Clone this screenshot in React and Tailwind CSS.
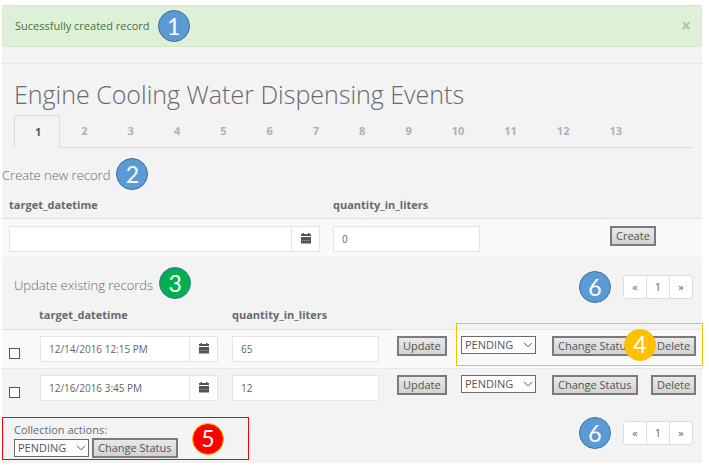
import React from "react";

const BADGE_COLORS = {
  blue: "bg-[#5b9bd5] border-[#41719c]",
  green: "bg-[#00b050] border-[#41719c]",
  amber: "bg-[#ffc000] border-[#ffc000]",
  red: "bg-[#ff0000] border-[#ffc000]",
};

function Badge({ color, children }) {
  return (
    <span
      className={`flex size-8 shrink-0 items-center justify-center rounded-full border font-['Lato','Open_Sans',sans-serif] text-[23px] leading-none text-white ${BADGE_COLORS[color]}`}
    >
      {children}
    </span>
  );
}

function ActionButton({ children }) {
  return (
    <button
      type="button"
      className="h-5 whitespace-nowrap border-2 border-[#7b7b7b] bg-linear-to-b from-[#e9e9e9] to-[#d3d3d3] px-1 text-[11px] leading-4 text-[#555555]"
    >
      {children}
    </button>
  );
}

function StatusSelect({ label, id }) {
  return (
    <div className="relative h-[18px] w-[75px]">
      <select
        id={id}
        aria-label={label}
        defaultValue="PENDING"
        className="block h-full w-full appearance-none border border-[#6b6b6b] bg-white pl-[3px] text-[11px] leading-4 text-[#555555]"
      >
        <option>PENDING</option>
        <option>APPROVED</option>
      </select>
      <svg
        viewBox="0 0 10 6"
        className="pointer-events-none absolute top-1.5 right-[3px] h-1.5 w-2.5"
        fill="none"
        stroke="#555555"
      >
        <path d="M1 0.8 L5 4.8 L9 0.8" />
      </svg>
    </div>
  );
}

function CalendarIcon() {
  return (
    <svg viewBox="0 0 10 11" className="h-[11px] w-2.5" fill="#50545c">
      <path d="M1.5 0h1.5v1h4V0h1.500v1H10v2H0V1h1.500z" />
      <path d="M0 4h10v6.500H0z" />
      <path d="M1 7.500h8" stroke="#a9abb0" strokeWidth="0.8" strokeDasharray="1.200 0.800" />
    </svg>
  );
}

function DateField({ label, value }) {
  return (
    <div className="flex h-[26px] border border-[#e4e4e4] bg-white">
      <input
        type="text"
        aria-label={label}
        defaultValue={value}
        className="w-full min-w-0 flex-1 px-2 text-[10px] text-[#5f6368] outline-none"
      />
      <button
        type="button"
        aria-label="Open calendar"
        className="flex w-7 shrink-0 items-center justify-center border-l border-[#e4e4e4]"
      >
        <CalendarIcon />
      </button>
    </div>
  );
}

function QuantityField({ label, value }) {
  return (
    <input
      type="text"
      aria-label={label}
      defaultValue={value}
      className="block h-[26px] w-[147px] border border-[#e4e4e4] bg-white px-2 text-[10px] text-[#5f6368] outline-none"
    />
  );
}

function Pager() {
  const item = "flex h-full flex-1 items-center justify-center";
  return (
    <nav
      aria-label="Pages"
      className="flex h-6 w-[70px] divide-x divide-[#dddddd] rounded-[3px] border border-[#dddddd] bg-white text-[11px] text-[#666666]"
    >
      <a href="#prev" className={item}>«</a>
      <a href="#page-1" className={item}>1</a>
      <a href="#next" className={item}>»</a>
    </nav>
  );
}

const PAGES = [1, 2, 3, 4, 5, 6, 7, 8, 9, 10, 11, 12, 13];

const RECORDS = [
  { id: 1, datetime: "12/14/2016 12:15 PM", quantity: "65" },
  { id: 2, datetime: "12/16/2016 3:45 PM", quantity: "12" },
];

export default function App() {
  return (
    <div className="bg-white pt-[5px] pr-[7px] pb-[3px] pl-0.5 font-['Open_Sans','Noto_Sans',sans-serif] text-[11px] leading-4 text-[#676a6c]">
      <main className="bg-[#f3f3f3]">
        <div
          role="status"
          className="flex h-[42px] items-center rounded-[3px] border border-[#d6e9c6] bg-[#dff0d8] pr-2.5 pl-3 text-[#3c763d]"
        >
          <span className="mr-2">Sucessfully created record</span>
          <Badge color="blue">1</Badge>
          <button
            type="button"
            aria-label="Close"
            className="ml-auto text-[17px] leading-4 font-bold text-[#b2c2ad]"
          >
            ×
          </button>
        </div>

        <div className="mt-4 border-t border-[#e7e7e7] px-3 pt-3">
          <h1 className="h-[39px] text-[25px] leading-9 font-light">
            Engine Cooling Water Dispensing Events
          </h1>
          <nav
            aria-label="Sections"
            className="mr-[-3px] flex h-[33px] border-b border-[#dddddd] font-bold"
          >
            {PAGES.map((n) => (
              <a
                key={n}
                href={`#tab-${n}`}
                className={
                  n === 1
                    ? "-mb-px flex items-center rounded-t-[3px] border border-b-0 border-[#dddddd] bg-[#f3f3f3] pr-[18px] pl-5 text-[#555555]"
                    : "flex items-center border border-transparent pr-[18px] pl-5 text-[#a7b1c2]"
                }
              >
                {n}
              </a>
            ))}
          </nav>
        </div>

        <section>
          <div className="flex items-center gap-1.5 pt-2.5">
            <h2 className="pt-0.5 text-[13px] font-light">Create new record</h2>
            <Badge color="blue">2</Badge>
          </div>
          <table className="w-full table-fixed border-collapse">
            <colgroup>
              <col />
              <col className="w-[278px]" />
              <col className="w-[98px]" />
            </colgroup>
            <thead>
              <tr className="h-7 text-left">
                <th className="border-b border-[#dddddd] pt-0.5 pl-[7px]">target_datetime</th>
                <th className="border-b border-[#dddddd] pt-0.5 pl-[7px]">quantity_in_liters</th>
                <td className="border-b border-[#e7e7e7]" />
              </tr>
            </thead>
            <tbody>
              <tr className="h-[39px] bg-[#f9f9f9] align-top">
                <td className="pt-[7px] pr-1.5 pl-[7px]">
                  <DateField label="target_datetime" value="" />
                </td>
                <td className="pt-[7px] pl-[7px]">
                  <QuantityField label="quantity_in_liters" value="0" />
                </td>
                <td className="pt-[7px] pl-1.5">
                  <ActionButton>Create</ActionButton>
                </td>
              </tr>
            </tbody>
          </table>
        </section>

        <section>
          <div className="flex h-[46px] items-end gap-1.5 pr-[9px] pl-3">
            <div className="flex items-center gap-1.5 pb-1">
              <h2 className="pt-1 text-[13px] font-light">Update existing records</h2>
              <Badge color="green">3</Badge>
            </div>
            <div className="ml-auto flex items-center gap-3">
              <Badge color="blue">6</Badge>
              <Pager />
            </div>
          </div>
          <div className="relative">
            <table className="w-full table-fixed border-collapse">
              <colgroup>
                <col className="w-[31px]" />
                <col />
                <col className="w-[165px]" />
                <col className="w-[64px]" />
                <col className="w-[91px]" />
                <col className="w-[99px]" />
                <col className="w-[57px]" />
              </colgroup>
              <thead>
                <tr className="h-[26px] text-left">
                  <td className="border-b border-[#dddddd]" />
                  <th className="border-b border-[#dddddd] pb-0.5 pl-1.5">target_datetime</th>
                  <th className="border-b border-[#dddddd] pb-0.5 pl-1.5">quantity_in_liters</th>
                  <td colSpan={4} className="border-b border-[#e7e7e7]" />
                </tr>
              </thead>
              <tbody>
                {RECORDS.map(({ id, datetime, quantity }) => (
                  <tr
                    key={id}
                    className="h-[39px] border-b border-[#e7e7e7] align-top odd:bg-[#f9f9f9] last:border-b-0"
                  >
                    <td className="pt-[18px] pl-[7px]">
                      <input
                        type="checkbox"
                        aria-label={`Select record ${id}`}
                        className="block size-[11px] appearance-none border border-[#555555] bg-white checked:bg-[#555555]"
                      />
                    </td>
                    <td className="pt-1.5 pr-2 pl-[7px]">
                      <DateField label={`target_datetime, record ${id}`} value={datetime} />
                    </td>
                    <td className="pt-1.5 pl-1.5">
                      <QuantityField label={`quantity_in_liters, record ${id}`} value={quantity} />
                    </td>
                    <td className="pt-1.5 pl-1.5">
                      <ActionButton>Update</ActionButton>
                    </td>
                    <td className="pt-1.5 pl-1.5">
                      <StatusSelect label={`Status, record ${id}`} />
                    </td>
                    <td className="pt-1.5 pl-1.5">
                      <ActionButton>Change Status</ActionButton>
                    </td>
                    <td className="pt-1.5 pl-1.5">
                      <ActionButton>Delete</ActionButton>
                    </td>
                  </tr>
                ))}
              </tbody>
            </table>
            <div className="pointer-events-none absolute top-5 -right-px flex h-[43px] w-[247px] items-center justify-end border border-[#ffc000] pr-[46px]">
              <Badge color="amber">4</Badge>
            </div>
          </div>
        </section>

        <footer className="flex items-start justify-between pt-2.5 pr-[9px] pb-[3px]">
          <div className="flex h-[43px] w-[247px] items-center justify-between border border-[#ff0000] pr-6 pl-[11px]">
            <div>
              <label htmlFor="collection-status" className="block pt-0.5">
                Collection actions:
              </label>
              <div className="flex items-center gap-[3px]">
                <StatusSelect id="collection-status" />
                <ActionButton>Change Status</ActionButton>
              </div>
            </div>
            <Badge color="red">5</Badge>
          </div>
          <div className="flex items-center gap-3">
            <Badge color="blue">6</Badge>
            <Pager />
          </div>
        </footer>
      </main>
    </div>
  );
}
